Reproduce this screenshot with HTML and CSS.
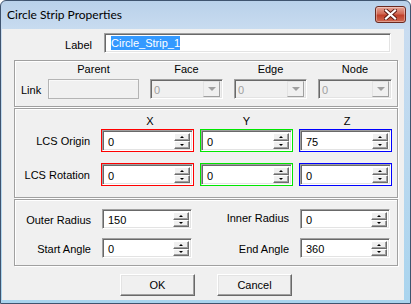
FILE: index.html
```html
<!DOCTYPE html>
<html lang="en">
<head>
    <meta charset="UTF-8">
    <title>Circle Strip Properties</title>
    <link rel="stylesheet" href="styles.css">
</head>
<body>
    <div class="window">
        <div class="titlebar">
            <span class="title">Circle Strip Properties</span>
            <span class="close">
                <svg width="13" height="11" viewBox="0 0 13 11">
                    <path d="M2 1.5 L11 9.5 M11 1.5 L2 9.5" stroke="#5a1a12" stroke-width="4" stroke-linecap="square"/>
                    <path d="M2 1.5 L11 9.5 M11 1.5 L2 9.5" stroke="#fff" stroke-width="2.2" stroke-linecap="square"/>
                </svg>
            </span>
        </div>
        <div class="client">
            <div class="label-row">
                <label class="row-label">Label</label>
                <div class="sunken label-input"><span class="selected">Circle_Strip_1</span></div>
            </div>

            <div class="group link-group">
                <span></span>
                <span class="head">Parent</span>
                <span class="head">Face</span>
                <span class="head">Edge</span>
                <span class="head">Node</span>
                <span class="link-label">Link</span>
                <div class="parent-box"></div>
                <div class="sunken combo"><span>0</span><i class="drop"></i></div>
                <div class="sunken combo"><span>0</span><i class="drop"></i></div>
                <div class="sunken combo"><span>0</span><i class="drop"></i></div>
            </div>

            <div class="group lcs-group">
                <div class="lcs-line">
                    <span></span>
                    <span class="head head-x">X</span>
                    <span class="head">Y</span>
                    <span class="head head-z">Z</span>
                </div>
                <div class="lcs-line lcs-row">
                    <span class="row-label">LCS Origin</span>
                    <div class="axis axis-x"><div class="sunken spin"><span>0</span><b class="arrows"><i class="up"></i><i class="down"></i></b></div></div>
                    <div class="axis axis-y"><div class="sunken spin"><span>0</span><b class="arrows"><i class="up"></i><i class="down"></i></b></div></div>
                    <div class="axis axis-z"><div class="sunken spin"><span>75</span><b class="arrows"><i class="up"></i><i class="down"></i></b></div></div>
                </div>
                <div class="lcs-line lcs-row second">
                    <span class="row-label">LCS Rotation</span>
                    <div class="axis axis-x"><div class="sunken spin"><span>0</span><b class="arrows"><i class="up"></i><i class="down"></i></b></div></div>
                    <div class="axis axis-y"><div class="sunken spin"><span>0</span><b class="arrows"><i class="up"></i><i class="down"></i></b></div></div>
                    <div class="axis axis-z"><div class="sunken spin"><span>0</span><b class="arrows"><i class="up"></i><i class="down"></i></b></div></div>
                </div>
            </div>

            <div class="group geo-group">
                <span class="row-label">Outer Radius</span>
                <div class="sunken spin"><span>150</span><b class="arrows"><i class="up"></i><i class="down"></i></b></div>
                <span class="row-label raised">Inner Radius</span>
                <div class="sunken spin"><span>0</span><b class="arrows"><i class="up"></i><i class="down"></i></b></div>
                <span class="row-label">Start Angle</span>
                <div class="sunken spin"><span>0</span><b class="arrows"><i class="up"></i><i class="down"></i></b></div>
                <span class="row-label">End Angle</span>
                <div class="sunken spin"><span>360</span><b class="arrows"><i class="up"></i><i class="down"></i></b></div>
            </div>

            <div class="buttons">
                <button>OK</button>
                <button>Cancel</button>
            </div>
        </div>
    </div>
</body>
</html>
```

FILE: styles.css
```css
* {
    box-sizing: border-box;
}
body {
    margin: 0;
    width: 411px;
    height: 304px;
    background: #fff;
    font-family: "Liberation Sans", Arial, sans-serif;
    font-size: 11px;
    color: #000;
    overflow: hidden;
}
.window {
    width: 411px;
    height: 304px;
    border: 1px solid #3f546f;
    border-radius: 6px 6px 0 0;
    background: linear-gradient(#b9d1ea, #c9dcf0 30px, #a9d4ee);
    display: flex;
    flex-direction: column;
}
.titlebar {
    height: 28px;
    display: flex;
    align-items: center;
    justify-content: space-between;
    padding: 0 4px 2px 6px;
}
.title {
    font-family: Lato, "Liberation Sans", sans-serif;
    font-size: 12px;
    color: #000;
}
.close {
    width: 31px;
    height: 17px;
    margin-top: 1px;
    border: 1px solid #6b2a20;
    border-radius: 3px;
    background: linear-gradient(#e5a597, #d26a55 45%, #c0402a 55%, #d06a52);
    box-shadow: inset 0 0 0 1px rgba(255,255,255,0.35);
    display: flex;
    align-items: center;
    justify-content: center;
}
.client {
    flex: 1;
    margin: 0 6px 3px 1px;
    background: #f0f0f0;
    padding: 4px 0 0 12px;
}

/* shared controls */
.sunken {
    border-style: solid;
    border-width: 1px;
    border-color: #a0a0a0 #fff #fff #a0a0a0;
    box-shadow: inset 1px 1px #696969, inset -1px -1px #e3e3e3;
    background: #fff;
}
.row-label {
    text-align: right;
    white-space: nowrap;
}
.head {
    text-align: center;
}
.group {
    width: 384px;
    border: 1px solid #a0a0a0;
    box-shadow: inset 1px 1px #fff, 1px 1px #fff;
}

/* label row */
.label-row {
    display: flex;
    align-items: center;
    height: 20px;
}
.label-row .row-label {
    width: 78px;
    padding-top: 3px;
}
.label-input {
    margin-left: 12px;
    width: 287px;
    height: 20px;
    padding: 3px 0 0 6px;
}
.selected {
    background: #3399ff;
    color: #fff;
    padding: 1px 0;
}

/* link group */
.link-group {
    margin-top: 7px;
    height: 47px;
    padding: 1px 0 0 6px;
    display: grid;
    grid-template-columns: 16px 91px 73px 73px 74px;
    grid-template-rows: 14px 20px;
    column-gap: 11px;
    row-gap: 3px;
    align-items: center;
}
.link-label {
    padding-top: 2px;
}
.parent-box {
    height: 20px;
    border: 1px solid #b4b4b4;
    box-shadow: inset 1px 1px #f9f9f9;
}
.combo {
    height: 20px;
    background: #f0f0f0;
    color: #a0a0a0;
    display: flex;
    align-items: center;
    padding: 1px 2px 0 3px;
}
.combo span {
    flex: 1;
}
.drop {
    width: 17px;
    height: 16px;
    margin-top: -1px;
    background: #f0f0f0;
    border: 1px solid;
    border-color: #e3e3e3 #a0a0a0 #a0a0a0 #e3e3e3;
    display: flex;
    align-items: center;
    justify-content: center;
}
.drop::after {
    content: "";
    border-left: 4px solid transparent;
    border-right: 4px solid transparent;
    border-top: 4px solid #a0a0a0;
}

/* LCS group */
.lcs-group {
    margin-top: 1px;
    height: 90px;
    padding-top: 5px;
}
.lcs-line {
    display: grid;
    grid-template-columns: 80px 93px 93px 93px;
    column-gap: 6px;
    align-items: center;
    height: 14px;
}
.lcs-line .row-label {
    padding-right: 5px;
}
.head-x {
    padding-left: 5px;
}
.head-z {
    padding-left: 3px;
}
.lcs-row {
    height: 23px;
    margin-top: 1px;
}
.lcs-row.second {
    margin-top: 11px;
}
/* coloured frame drawn as a padded background */
.axis {
    height: 23px;
    padding: 1px;
}
.axis-x {
    background: #ff0000;
}
.axis-y {
    background: #00e600;
}
.axis-z {
    background: #0000ff;
}
.axis .spin {
    height: 21px;
}

/* spinner */
.spin {
    height: 20px;
    display: flex;
    align-items: center;
    padding: 2px 2px 1px 5px;
}
.spin span {
    flex: 1;
    padding-top: 1px;
}
.arrows {
    width: 16px;
    height: 100%;
    display: flex;
    flex-direction: column;
}
.arrows i {
    flex: 1;
    background: #f0f0f0;
    border: 1px solid;
    border-color: #fff #6d6d6d #6d6d6d #fff;
    box-shadow: inset -1px -1px #a0a0a0;
    display: flex;
    align-items: center;
    justify-content: center;
}
.arrows .up::after {
    content: "";
    border-left: 2px solid transparent;
    border-right: 2px solid transparent;
    border-bottom: 2px solid #000;
}
.arrows .down::after {
    content: "";
    border-left: 2px solid transparent;
    border-right: 2px solid transparent;
    border-top: 2px solid #000;
}

/* geometry group */
.geo-group {
    margin-top: 1px;
    height: 67px;
    padding-top: 9px;
    display: grid;
    grid-template-columns: 87px 90px 108px 90px;
    grid-template-rows: 20px 20px;
    row-gap: 9px;
    align-items: center;
}
.geo-group .row-label {
    padding: 2px 11px 0 0;
}
.geo-group .row-label.raised {
    padding-top: 0;
    margin-top: -3px;
}

/* buttons */
.buttons {
    width: 384px;
    margin-top: 8px;
    display: flex;
    justify-content: center;
    gap: 22px;
}
button {
    width: 75px;
    height: 22px;
    font-family: "Liberation Sans", Arial, sans-serif;
    font-size: 11px;
    color: #000;
    background: #f0f0f0;
    border: 1px solid;
    border-color: #fff #696969 #696969 #fff;
    box-shadow: inset -1px -1px #a0a0a0, inset 1px 1px #e3e3e3;
    padding: 0;
}
```
